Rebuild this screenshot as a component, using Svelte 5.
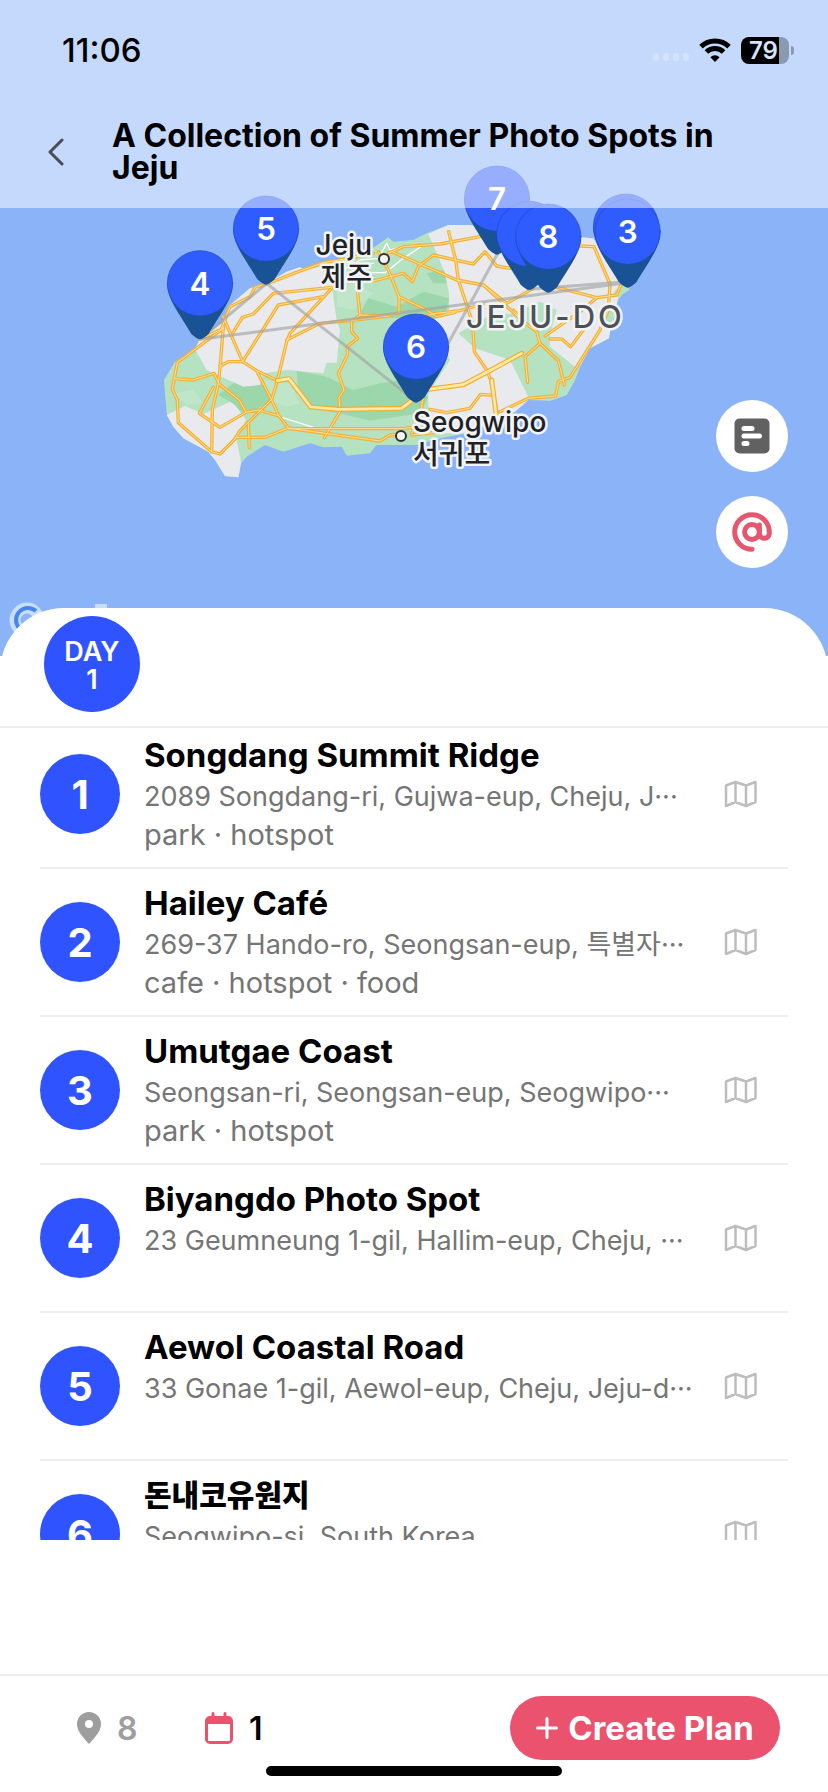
<script>
  const spots = [
    { name: 'Songdang Summit Ridge', address: '2089 Songdang-ri, Gujwa-eup, Cheju, J', cut: true, tags: ['park', 'hotspot'] },
    { name: 'Hailey Café', address: '269-37 Hando-ro, Seongsan-eup, 특별자', cut: true, tags: ['cafe', 'hotspot', 'food'] },
    { name: 'Umutgae Coast', address: 'Seongsan-ri, Seongsan-eup, Seogwipo', cut: true, tags: ['park', 'hotspot'] },
    { name: 'Biyangdo Photo Spot', address: '23 Geumneung 1-gil, Hallim-eup, Cheju, ', cut: true, tags: [] },
    { name: 'Aewol Coastal Road', address: '33 Gonae 1-gil, Aewol-eup, Cheju, Jeju-d', cut: true, tags: [] },
    { name: '돈내코유원지', korean: true, address: 'Seogwipo-si, South Korea', cut: false, tags: [] }
  ];

  // Pin heads in map units, in drawing order.
  const pins = [
    { n: '7', x: 1071, y: 146 },
    { n: '', x: 1168, y: 252 },
    { n: '8', x: 1225, y: 260 },
    { n: '', x: 1458, y: 230 },
    { n: '3', x: 1463, y: 245 },
    { n: '5', x: 378, y: 236 },
    { n: '4', x: 180, y: 400 },
    { n: '6', x: 828, y: 590 }
  ];

  const roads = [
    'M180 568 L250 535 L112 637 L97 718 L112 750 L115 818 L215 905 L240 912 L290 862 L375 862 L445 834 L505 843 L720 873 L750 855 L780 852',
    'M245 535 L270 470 L330 440 L345 412 L380 402 L475 365 L550 338 L600 330 L700 310',
    'M250 530 L240 655 L235 700 L217 780 L215 905',
    'M262 530 L308 635 L265 635 L240 648',
    'M308 635 L350 662 L412 692',
    'M350 662 L395 750 L415 795 L445 834',
    'M250 500 L262 530 M275 555 L307 502 L340 492 L400 430 L575 412',
    'M308 635 L415 465 L550 440',
    'M575 415 L450 550 L440 575 L412 692 L395 750',
    'M440 570 L540 520 L630 512 L745 498 L780 488',
    'M103 686 L160 690 L222 670 L238 703 L298 750 L318 787 L355 780 L415 797',
    'M220 712 L178 790 L240 832 L318 787',
    'M395 748 L300 842 L285 865',
    'M325 815 L328 893',
    'M650 400 L660 495 L635 515 L635 545 L653 565 L622 590 L622 615 L595 670 L612 720 L597 742 L600 785 L553 863',
    'M445 836 L790 836 L830 830',
    'M715 305 L745 360 L777 440 L777 490 M777 440 L860 480 L890 500',
    'M660 495 L745 498',
    'M700 393 L790 370 L817 395 L835 350 L880 315 L1000 342 L1035 305 L1070 348 L1110 355',
    'M755 305 L950 390 L1030 405 L1100 460 L1180 415',
    'M745 310 L790 290 L900 282 L1020 260',
    'M926 245 L947 330 L955 390 L985 480 L998 520 L1003 605 L1040 660 L1052 690 L1072 790',
    'M865 495 L890 490 L960 482 L1030 462 M890 500 L945 487',
    'M1030 405 L1150 515 L1190 545 L1200 580 L1155 620 L1163 697',
    'M1200 580 L1255 632 L1273 705',
    'M1320 288 L1362 290 L1410 402 L1405 480 L1380 540 L1290 682 L1255 695 L1247 738 L1165 745 L1080 785',
    'M1250 412 L1370 443 L1430 435 L1445 400',
    'M1215 558 L1330 478 L1370 443 M1230 567 L1265 567 L1292 590 L1330 540',
    'M870 778 L920 788 L990 775 L1022 733 L1060 736',
    'M850 740 L840 800 L815 850',
    'M1120 480 L1150 515',
    'M815 855 L905 845'
  ];

  const highways = [
    'M412 692 L447 686 L512 771 L597 778 L785 775 L828 742',
    'M865 718 L970 704 L1042 666 L1145 610',
    'M1055 690 L1068 790'
  ];
</script>

<main class="screen">
  <section class="map" aria-label="Map of Jeju">
    <svg class="canvas" viewBox="0 0 828 656" preserveAspectRatio="xMidYMin slice" aria-hidden="true">
      <rect x="-1000" width="2828" height="656" fill="#8ab3f8" />
      <g transform="translate(140 150) scale(.333333)" stroke-linejoin="round" stroke-linecap="round">
        <path fill="#b5e2c1" d="M180 568 L245 520 L270 465 L330 415 L380 400 L440 365 L480 352 L500 360 L560 340 L690 300 L745 262 L760 275 L820 270 L860 250 L925 225 L990 225 L1100 250 L1320 262 L1360 265 L1380 300 L1410 350 L1440 395 L1470 418 L1445 435 L1432 455 L1410 545 L1407 565 L1350 595 L1325 640 L1305 690 L1280 735 L1230 752 L1165 750 L1125 785 L980 850 L900 865 L830 885 L710 885 L690 910 L620 917 L605 890 L550 892 L510 880 L430 905 L375 885 L320 920 L303 940 L295 982 L255 978 L225 930 L205 905 L130 865 L100 830 L80 790 L72 690 L105 635 L165 595 Z" />
        <g fill="#9cd6ab">
          <path d="M660 490 L685 445 L770 470 L850 425 L927 445 L915 500 L860 510 L700 500 Z" />
          <path d="M470 662 L560 680 L640 720 L720 700 L790 690 L865 740 L840 790 L690 812 L600 790 L510 775 L475 730 Z" />
          <path d="M235 735 L280 700 L370 690 L400 740 L350 780 L310 790 L270 755 Z" />
          <path d="M860 370 L915 360 L920 400 L880 400 Z" />
        </g>
        <g fill="#bfe6c9">
          <path d="M590 410 L650 400 L700 430 L640 480 L590 470 Z" />
          <path d="M370 690 L450 700 L480 760 L440 770 L390 750 Z" />
          <path d="M100 730 L160 720 L190 760 L140 765 Z" />
        </g>
        <g fill="#e8eaed">
          <path d="M180 568 L245 520 L270 465 L330 415 L380 400 L440 365 L480 352 L500 360 L540 350 L575 405 L590 510 L600 540 L590 638 L560 638 L550 670 L440 660 L370 670 L360 705 L310 710 L200 660 L165 597 Z" />
          <path d="M80 795 L135 768 L190 792 L270 755 L285 765 L318 810 L290 870 L300 920 L303 940 L295 982 L255 978 L225 930 L205 905 L130 865 L100 830 Z" />
          <path d="M865 252 L925 225 L990 225 L1100 250 L1320 262 L1360 265 L1380 300 L1410 350 L1440 395 L1432 455 L1410 545 L1407 565 L1350 595 L1325 640 L1310 655 L1165 750 L1125 785 L980 850 L900 850 L865 770 L865 730 L930 630 L880 510 L927 480 L927 430 L915 370 L890 310 Z" />
        </g>
        <path fill="#b5e2c1" d="M955 550 L1060 490 L1110 492 L1200 455 L1250 480 L1230 555 L1230 590 L1310 655 L1305 690 L1280 735 L1230 752 L1165 740 L1110 630 L1005 595 Z" />
        <path fill="#b5e2c1" d="M1440 405 L1470 418 L1445 432 L1420 430 Z M1400 470 L1425 480 L1410 540 L1395 520 Z" />
        <path fill="none" stroke="#fff" stroke-width="4" d="M600 365 L660 330 L715 325 L740 280 L750 300 L820 285 M690 368 L735 368 L790 325 L850 285 M415 799 L540 838 M640 345 L700 340" />
        <g fill="none" stroke="#f5b02e" stroke-width="10">
          {#each roads as d}<path {d} />{/each}
        </g>
        <g fill="none" stroke="#fbe0a0" stroke-width="3">
          {#each roads as d}<path {d} />{/each}
        </g>
        {#each highways as d}
          <path {d} fill="none" stroke="#f3ae2c" stroke-width="15" />
          <path {d} fill="none" stroke="#fde9a6" stroke-width="8" />
        {/each}
        <path fill="none" stroke="#a3a3a3" stroke-opacity=".65" stroke-width="9" d="M180 568 L380 400 L828 755 L1072 312 M180 568 L1460 398 M1165 418 L1460 395" />
        {#each pins as pin}
          <g transform="translate({pin.x} {pin.y})">
            <path fill="#1a5296" d="M-98 0 C-98 50 -62 90 -26 152 Q-8 168 0 168 Q8 168 26 152 C62 90 98 50 98 0 Z" />
            <circle r="98" fill="#2f5cff" stroke="#2348b8" stroke-width="2" />
            {#if pin.n}<text class="pin-number" y="34">{pin.n}</text>{/if}
          </g>
        {/each}
        <g fill="#f4f4f4" stroke="#333" stroke-width="6">
          <circle cx="732" cy="327" r="15" />
          <circle cx="783" cy="858" r="15" />
        </g>
      </g>
      <g class="place">
        <text x="372" y="255" text-anchor="end">Jeju</text>
        <text x="372" y="287" text-anchor="end">제주</text>
        <text x="413" y="432">Seogwipo</text>
        <text x="413" y="464">서귀포</text>
        <text class="province" x="466" y="328">JEJU-DO</text>
      </g>
      <circle cx="27" cy="620" r="12" fill="none" stroke="#c9defc" stroke-width="11" />
      <path d="M36 611 A12 12 0 1 0 36 629" fill="none" stroke="#4587ea" stroke-width="4" />
      <rect x="95" y="604" width="12" height="8" fill="#c9defc" />
    </svg>

    <header class="top">
      <div class="status">
        <span class="time">11:06</span>
        <div class="status-icons">
          <span class="dots"><i></i><i></i><i></i><i></i></span>
          <svg width="32" height="24" viewBox="0 0 32 24" aria-hidden="true">
            <g fill="none" stroke="#000" stroke-width="5">
              <path d="M2 8.6 A20 20 0 0 1 30 8.6" />
              <path d="M7.4 14 A12.4 12.4 0 0 1 24.6 14" />
            </g>
            <path d="M16 24 L11.4 19.2 A6.6 6.6 0 0 1 20.6 19.2 Z" />
          </svg>
          <span class="battery">79</span>
        </div>
      </div>
      <div class="heading">
        <button class="back" aria-label="Back">
          <svg width="16" height="28" viewBox="0 0 16 28" aria-hidden="true"><path d="M14 2 L2 14 L14 26" fill="none" stroke="#4c4a55" stroke-width="3" stroke-linecap="round" stroke-linejoin="round" /></svg>
        </button>
        <h1>A Collection of Summer Photo Spots in Jeju</h1>
      </div>
    </header>

    <div class="fabs">
      <button class="fab" aria-label="Notes">
        <svg width="36" height="36" viewBox="0 0 36 36" aria-hidden="true">
          <rect x=".5" y=".5" width="35" height="35" rx="5" fill="#616161" />
          <path d="M10 10.500 H18 M10 18 H25.500 M10 25.500 H13" stroke="#fff" stroke-width="5" stroke-linecap="round" />
        </svg>
      </button>
      <button class="fab" aria-label="Mentions">
        <svg width="40" height="40" viewBox="0 0 40 40" fill="none" stroke="#e5566f" stroke-width="5" stroke-linecap="round" aria-hidden="true">
          <path d="M20 37.300 A17.300 17.300 0 1 1 37.300 20 V22 A5 5 0 0 1 27.400 22 V13" />
          <circle cx="20" cy="20" r="7.400" />
        </svg>
      </button>
    </div>
  </section>

  <section class="sheet">
    <div class="days">
      <button class="day">DAY<br />1</button>
    </div>
    <ol class="spots">
      {#each spots as spot, i}
        <li>
          <span class="index">{i + 1}</span>
          <div class="info">
            <h2 class:korean={spot.korean}>{spot.name}</h2>
            <p>{spot.address}{spot.cut ? '···' : ''}</p>
            {#if spot.tags.length}<p class="tags">{spot.tags.join(' · ')}</p>{/if}
          </div>
          <button class="open" aria-label="Show on map">
            <svg width="34" height="28" viewBox="0 0 34 28" fill="none" stroke="#bdbdbd" stroke-width="2.500" stroke-linejoin="round" aria-hidden="true">
              <path d="M2 5.500 L11.500 2 L22 5.500 L31.500 2 V22 L22 26 L11.500 22 L2 26 Z M11.500 2 V22 M22 5.500 V26" />
            </svg>
          </button>
        </li>
      {/each}
    </ol>
  </section>

  <footer>
    <div class="bar">
      <span class="count places">
        <svg width="24" height="32" viewBox="0 0 24 32" aria-hidden="true"><path fill="#9e9e9e" fill-rule="evenodd" d="M12 0 A12 12 0 0 0 0 12 C0 19 5 24 12 32 C19 24 24 19 24 12 A12 12 0 0 0 12 0 Z M12 8 A4 4 0 1 1 12 16 A4 4 0 1 1 12 8 Z" /></svg>
        8
      </span>
      <span class="count">
        <svg width="28" height="32" viewBox="0 0 28 32" aria-hidden="true">
          <path fill="#ea526d" fill-rule="evenodd" d="M5 4 H23 A5 5 0 0 1 28 9 V27 A5 5 0 0 1 23 32 H5 A5 5 0 0 1 0 27 V9 A5 5 0 0 1 5 4 Z M3 12 V28 A1 1 0 0 0 4 29 H24 A1 1 0 0 0 25 28 V12 Z" />
          <path d="M8 1.500 V6 M20 1.500 V6" stroke="#ea526d" stroke-width="3" stroke-linecap="round" />
        </svg>
        1
      </span>
      <button class="create">
        <svg width="22" height="22" viewBox="0 0 22 22" aria-hidden="true"><path d="M11 1.500 V20.500 M1.500 11 H20.500" stroke="#fff" stroke-width="3" stroke-linecap="round" /></svg>
        Create Plan
      </button>
    </div>
    <div class="home"></div>
  </footer>
</main>

<style>
  :global(body) {
    margin: 0;
    background: #fff;
  }
  .screen {
    display: flex;
    flex-direction: column;
    height: 100vh;
    overflow: hidden;
    background: #fff;
    color: #000;
    font-family: Inter, 'Noto Sans CJK KR', sans-serif;
  }
  button {
    border: 0;
    padding: 0;
    background: none;
    color: inherit;
    font: inherit;
    cursor: pointer;
  }
  svg {
    display: block;
    flex: none;
  }
  .map {
    position: relative;
    flex: none;
    height: 656px;
  }
  .canvas {
    position: absolute;
    inset: 0;
    width: 100%;
    height: 100%;
  }
  .pin-number {
    fill: #fff;
    font-size: 94px;
    font-weight: 600;
    text-anchor: middle;
  }
  .place {
    fill: #202124;
    stroke: #f1f3f6;
    stroke-width: 5px;
    stroke-linejoin: round;
    paint-order: stroke;
    font-size: 28px;
    font-weight: 500;
  }
  .province {
    fill: #4d5156;
    font-size: 31px;
    letter-spacing: 3px;
  }
  .top {
    position: relative;
    box-sizing: border-box;
    height: 208px;
    padding: 28px 32px 0 40px;
    background: rgba(255, 255, 255, 0.5);
  }
  .status {
    display: flex;
    align-items: center;
    justify-content: space-between;
    height: 44px;
    padding-left: 22px;
  }
  .time {
    font-size: 33px;
    font-weight: 500;
  }
  .status-icons {
    display: flex;
    align-items: center;
    gap: 10px;
  }
  .dots {
    display: flex;
    gap: 4px;
    padding-top: 14px;
  }
  .dots i {
    width: 6px;
    height: 8px;
    border-radius: 3px;
    background: #d3e3fd;
  }
  .battery {
    position: relative;
    width: 48px;
    height: 27px;
    margin-right: 7px;
    border-radius: 8px;
    background: linear-gradient(90deg, #000 79%, #8a9ab3 79%);
    color: #d6e4fd;
    font-size: 24px;
    font-weight: 600;
    line-height: 27px;
    text-indent: 8px;
  }
  .battery::after {
    content: '';
    position: absolute;
    left: 50px;
    top: 9px;
    width: 3px;
    height: 9px;
    border-radius: 0 4px 4px 0;
    background: #8a9ab3;
  }
  .heading {
    display: flex;
    align-items: center;
    gap: 48px;
    padding: 48px 40px 0 8px;
  }
  .back {
    width: 16px;
  }
  h1 {
    margin: 0;
    font-size: 32px;
    font-weight: 700;
    line-height: 32px;
  }
  .fabs {
    position: absolute;
    top: 400px;
    right: 40px;
    display: grid;
    gap: 24px;
  }
  .fab {
    display: grid;
    place-items: center;
    width: 72px;
    height: 72px;
    border-radius: 50%;
    background: #fff;
  }
  .sheet {
    position: relative;
    display: flex;
    flex: 1;
    flex-direction: column;
    min-height: 0;
    margin-top: -48px;
    border-radius: 64px 64px 0 0;
    background: #fff;
  }
  .days {
    display: flex;
    flex: none;
    padding: 8px 44px 14px;
    border-bottom: 2px solid #eee;
  }
  .day {
    width: 96px;
    height: 96px;
    padding-top: 4px;
    border-radius: 50%;
    background: #2f54ff;
    color: #fff;
    font-size: 27px;
    font-weight: 600;
    line-height: 28px;
  }
  .spots {
    flex: 1;
    min-height: 0;
    margin: 0 40px 134px;
    padding: 0;
    overflow: hidden;
    list-style: none;
  }
  li {
    display: grid;
    grid-template-columns: 80px 1fr 64px;
    align-items: center;
    column-gap: 24px;
    box-sizing: border-box;
    height: 148px;
    border-bottom: 2px solid #eee;
  }
  li:first-child {
    margin-top: -7px;
  }
  .index {
    display: grid;
    place-items: center;
    height: 80px;
    border-radius: 50%;
    background: #2f54ff;
    color: #fff;
    font-size: 40px;
    font-weight: 700;
  }
  .info {
    align-self: start;
    min-width: 0;
    padding-top: 12px;
    white-space: nowrap;
  }
  h2 {
    margin: 0 0 1px;
    font-size: 33px;
    font-weight: 700;
    line-height: 44px;
  }
  .korean {
    font-size: 30px;
    font-weight: 900;
  }
  p {
    margin: 0;
    color: #757575;
    font-size: 27px;
    line-height: 38px;
    white-space: pre;
  }
  .tags {
    font-size: 29px;
  }
  .open {
    justify-self: start;
  }
  footer {
    flex: none;
    border-top: 2px solid #eee;
  }
  .bar {
    display: flex;
    align-items: center;
    padding: 20px 48px 6px 77px;
  }
  .count {
    display: flex;
    align-items: center;
    gap: 16px;
    font-size: 32px;
    font-weight: 600;
  }
  .places {
    width: 128px;
    color: #9e9e9e;
  }
  .create {
    display: flex;
    align-items: center;
    justify-content: center;
    gap: 10px;
    min-width: 270px;
    height: 64px;
    margin-left: auto;
    border-radius: 32px;
    background: #ea526d;
    color: #fff;
    font-size: 33px;
    font-weight: 700;
  }
  .home {
    width: 296px;
    height: 10px;
    margin: 0 auto 16px;
    border-radius: 5px;
    background: #000;
  }
</style>
